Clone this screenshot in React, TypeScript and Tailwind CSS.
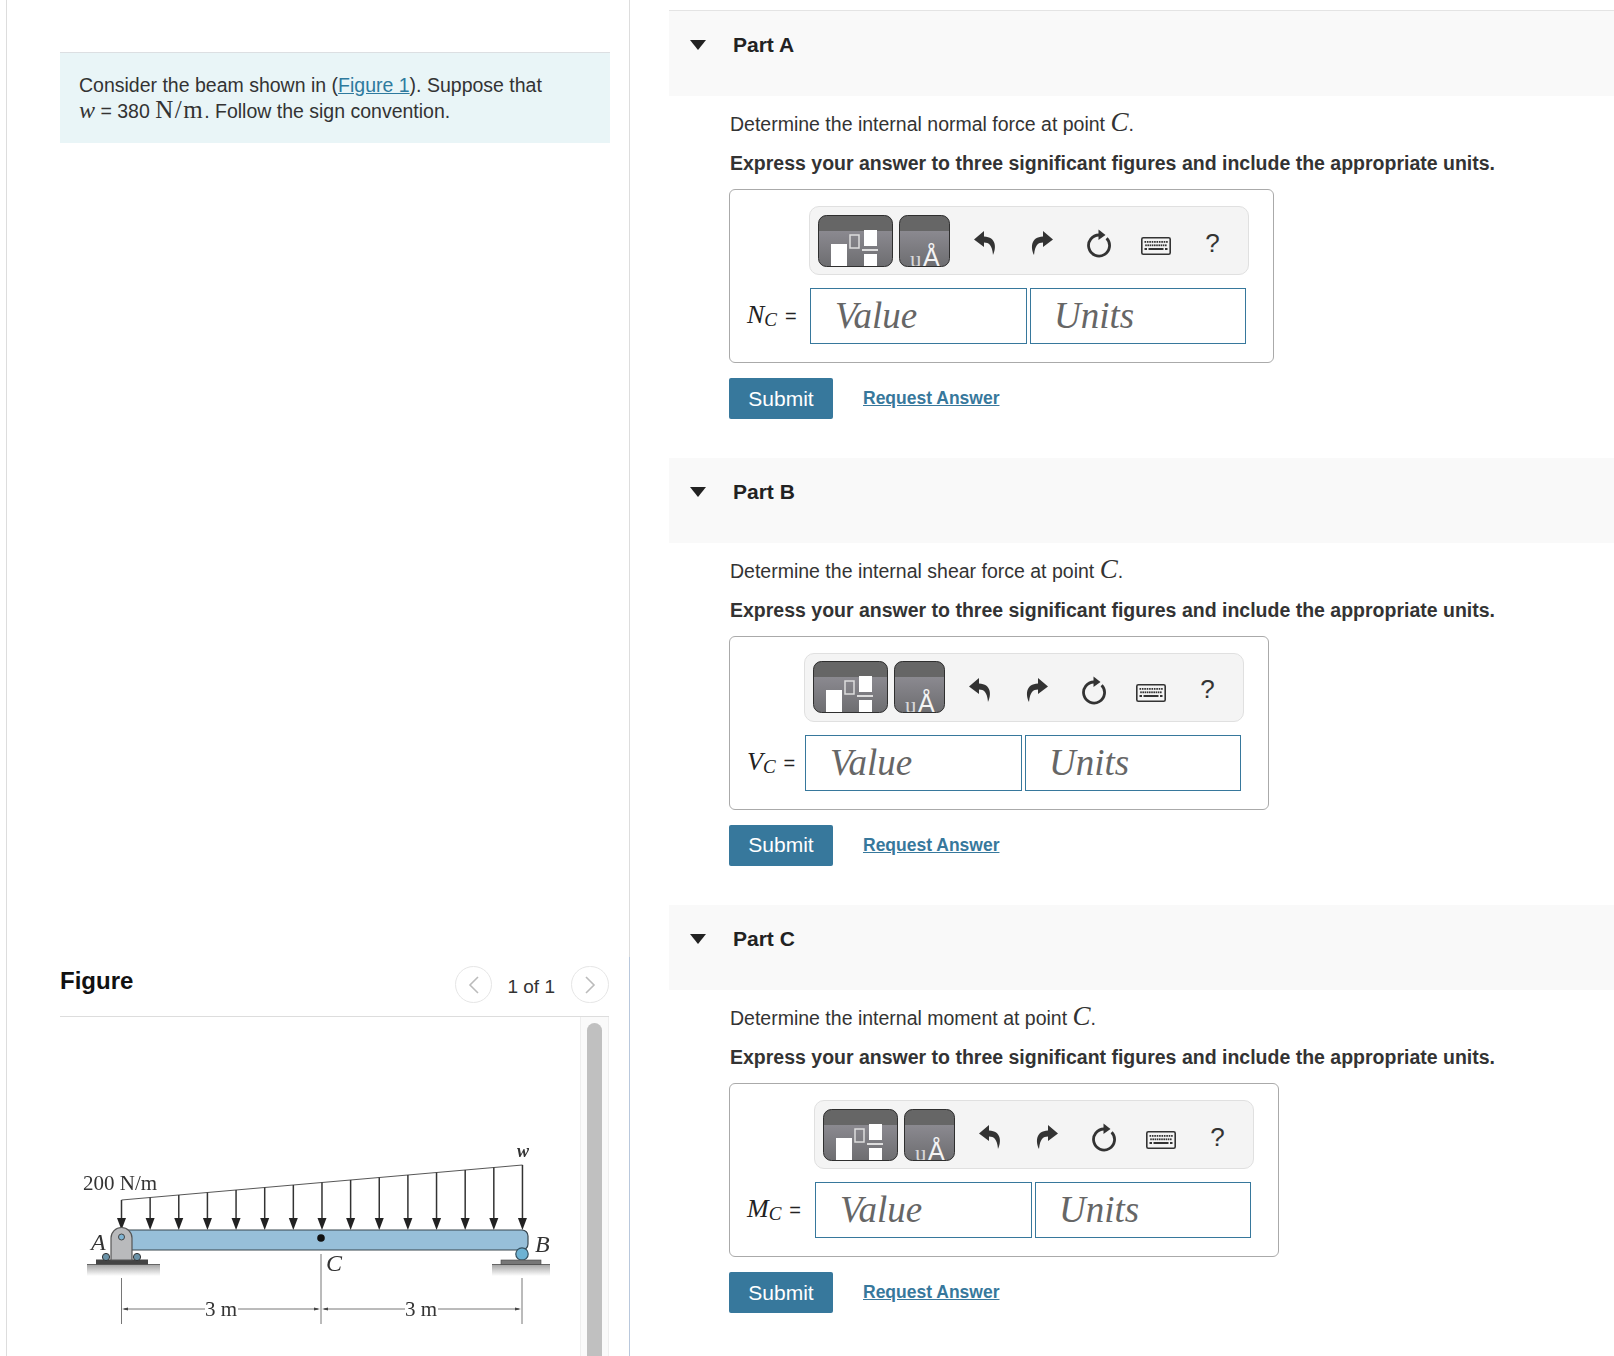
function TemplateButton() {
    return (
        <svg width="75" height="52" viewBox="0 0 75 52" className="block">
            <defs>
                <linearGradient id="tb" x1="0" y1="0" x2="0" y2="1">
                    <stop offset="0" stopColor="#98969e" />
                    <stop offset="1" stopColor="#6d6d70" />
                </linearGradient>
                <clipPath id="tc"><rect x="0.5" y="0.5" width="74" height="51" rx="8" /></clipPath>
            </defs>
            <g clipPath="url(#tc)">
                <rect width="75" height="52" fill="url(#tb)" />
                <rect width="75" height="16" fill="#666666" />
                <rect x="13" y="29" width="16" height="23" fill="#fff" />
                <rect x="32" y="20" width="9" height="13" fill="none" stroke="#ddd" strokeWidth="1.5" />
                <rect x="46" y="15" width="13" height="16" fill="#fff" />
                <rect x="44" y="34" width="16" height="2" fill="#ddd" />
                <rect x="46" y="39" width="13" height="13" fill="#fff" />
            </g>
            <rect x="0.5" y="0.5" width="74" height="51" rx="8" fill="none" stroke="#2f2f2f" />
        </svg>
    )
}

function UnitButton() {
    return (
        <svg width="51" height="52" viewBox="0 0 51 52" className="block">
            <defs>
                <linearGradient id="ub" x1="0" y1="0" x2="0" y2="1">
                    <stop offset="0" stopColor="#98969e" />
                    <stop offset="1" stopColor="#6d6d70" />
                </linearGradient>
                <clipPath id="uc"><rect x="0.5" y="0.5" width="50" height="51" rx="8" /></clipPath>
            </defs>
            <g clipPath="url(#uc)">
                <rect width="51" height="52" fill="url(#ub)" />
                <rect width="51" height="16" fill="#666666" />
                <text x="11" y="52" fontSize="23" fill="#d8d8d8" fontFamily="Liberation Serif">u</text>
                <text x="24" y="51" fontSize="25" fill="#f4f4f4" fontFamily="Liberation Sans">Å</text>
            </g>
            <rect x="0.5" y="0.5" width="50" height="51" rx="8" fill="none" stroke="#2f2f2f" />
        </svg>
    )
}

function UndoIcon({ flip }: { flip?: boolean }) {
    return (
        <svg width="24" height="28" viewBox="0 0 24 28" className={flip ? '-scale-x-100' : ''}>
            <path d="M11 2 L1 10.5 L11 18 V13.5 C16 13.5 19 16 20 26 C23.5 19 23.5 8 11 7.5 Z" fill="#333" />
        </svg>
    )
}

function RefreshIcon() {
    return (
        <svg width="28" height="30" viewBox="0 0 28 30">
            <path d="M14 7 A10.5 10.5 0 1 0 21.6 10.2" fill="none" stroke="#333" strokeWidth="2.8" />
            <path d="M13.5 1.5 L20.5 7 L13.5 12 Z" fill="#333" />
        </svg>
    )
}

function KeyboardIcon() {
    const keys = [0, 1, 2, 3, 4, 5, 6, 7, 8, 9]
    return (
        <svg width="30" height="18" viewBox="0 0 30 18">
            <rect x="0.8" y="0.8" width="28.4" height="16.4" rx="1.5" fill="#f4f4f4" stroke="#333" strokeWidth="1.6" />
            {keys.map(i => <rect key={i} x={3.5 + i * 2.4} y="4" width="1.6" height="1.8" fill="#333" />)}
            {keys.map(i => <rect key={i} x={4.2 + i * 2.2} y="7.4" width="1.6" height="1.8" fill="#333" />)}
            <rect x="3.5" y="11" width="2.5" height="2" fill="#333" />
            <rect x="7.5" y="11" width="15" height="2" fill="#333" />
            <rect x="24" y="11" width="2.5" height="2" fill="#333" />
        </svg>
    )
}

function Slot({ children }: { children: React.ReactNode }) {
    return <div className="w-[57px] flex items-center justify-center">{children}</div>
}

interface PartProps {
    name: string
    prompt: string
    symbol: string
    /** left edge of the inputs, counted from the box */
    labelWidth: string
    boxWidth: string
    /** only the first header has the rule on top */
    first?: boolean
}

function Part({ name, prompt, symbol, labelWidth, boxWidth, first }: PartProps) {
    return (
        <section className={first ? 'mb-[38.5px]' : 'mb-[39.5px]'}>
            <div className={`${first ? 'h-[86px] border-t border-[#e4e4e4]' : 'h-[85px]'} bg-[#f9f9f9] flex items-center pb-[17px]`}>
                <svg width="16" height="10" viewBox="0 0 16 10" className="ml-[21px]">
                    <path d="M0 0 H16 L8 10 Z" fill="#222" />
                </svg>
                <h2 className="ml-[27px] text-[21px] font-bold text-[#222]">Part {name}</h2>
            </div>
            <div className="pl-[60px]">
                <p className="mt-[14px] pl-[1px] leading-[24px] text-[19.5px] text-[#333]">
                    Determine the internal {prompt} at point <i className="font-['Liberation_Serif'] text-[27px]">C</i>.
                </p>
                <p className="mt-[15px] pl-[1px] leading-[24px] text-[19.5px] font-bold text-[#333]">
                    Express your answer to three significant figures and include the appropriate units.
                </p>
                <div className={`mt-[14px] h-[174px] ${boxWidth} border border-[#aaaaaa] rounded-[6px] pt-[16px] pl-[17px]`}>
                    <div className="flex">
                        <div className={labelWidth} />
                        <div className="w-[440px] h-[69px] -ml-[1px] bg-[#f4f4f4] border border-[#e0e0e0] rounded-[10px] flex items-center pl-[8px]">
                            <TemplateButton />
                            <div className="ml-[6px]"><UnitButton /></div>
                            <div className="ml-[6px] mt-[5px] flex items-center">
                                <Slot><UndoIcon /></Slot>
                                <Slot><UndoIcon flip /></Slot>
                                <Slot><RefreshIcon /></Slot>
                                <Slot><div className="mt-[6px]"><KeyboardIcon /></div></Slot>
                                <Slot><span className="text-[26px] text-[#333]">?</span></Slot>
                            </div>
                        </div>
                    </div>
                    <div className="flex items-center mt-[13px]">
                        <div className={`${labelWidth} font-['Liberation_Serif'] text-[#222] text-[26px] leading-[30px] whitespace-nowrap`}>
                            <i>{symbol}</i><i className="text-[19px] relative top-[3px]">C</i>
                            <span className="font-['Liberation_Sans'] text-[20px] ml-[8px]">=</span>
                        </div>
                        <div className="w-[217px] h-[56px] border border-[#37789c] pl-[24px] flex items-center font-['Liberation_Serif'] italic text-[37px] text-[#666]">Value</div>
                        <div className="w-[216px] h-[56px] ml-[3px] border border-[#37789c] pl-[23px] flex items-center font-['Liberation_Serif'] italic text-[37px] text-[#666]">Units</div>
                    </div>
                </div>
                <div className="mt-[15px] flex items-center">
                    <button className="w-[104px] h-[41px] bg-[#37789c] rounded-[2px] text-white text-[21px]">Submit</button>
                    <a className="ml-[30px] text-[#37789c] text-[17.5px] font-bold underline">Request Answer</a>
                </div>
            </div>
        </section>
    )
}

function BeamFigure() {
    const arrows = Array.from({ length: 15 }, (_, i) => 61.5 + i * 28.64)
    return (
        <svg width="520" height="339" viewBox="0 0 520 339" className="block blur-[0.6px]">
            <defs>
                <linearGradient id="shade" x1="0" y1="0" x2="0" y2="1">
                    <stop offset="0" stopColor="#a8a8a8" />
                    <stop offset="1" stopColor="#ffffff" />
                </linearGradient>
            </defs>
            {/* load */}
            <path d="M61.5 183 L462.5 148" stroke="#444" strokeWidth="0.9" fill="none" />
            {arrows.map((x, i) => (
                <g key={x}>
                    <line x1={x} y1={183 - i * 2.5} x2={x} y2="204" stroke="#333" strokeWidth="1.5" />
                    <path d={`M${x - 4.5} 201 L${x + 4.5} 201 L${x} 213 Z`} fill="#222" />
                </g>
            ))}
            {/* ground shadows */}
            <rect x="27" y="248" width="73" height="11" fill="url(#shade)" />
            <rect x="432" y="248" width="58" height="11" fill="url(#shade)" />
            <line x1="27" y1="247.5" x2="100" y2="247.5" stroke="#666" strokeWidth="1.2" />
            <line x1="432" y1="247.5" x2="490" y2="247.5" stroke="#666" strokeWidth="1.2" />
            {/* beam */}
            <rect x="58" y="213" width="410" height="20" rx="6" fill="#97bfd9" stroke="#38464f" strokeWidth="1.2" />
            <circle cx="261" cy="221" r="3.8" fill="#111" />
            {/* pin support */}
            <rect x="36" y="242.5" width="52" height="5" fill="#444" />
            <circle cx="46" cy="240" r="3.6" fill="#6b93a8" stroke="#333" />
            <circle cx="77" cy="240" r="3.6" fill="#6b93a8" stroke="#333" />
            <path d="M51 243 V221 A10.5 10.5 0 0 1 72 221 V243 Z" fill="#b9babc" stroke="#555" strokeWidth="1.2" />
            <circle cx="61.5" cy="220" r="3" fill="#7fb4d3" stroke="#444" />
            {/* roller */}
            <circle cx="462" cy="237" r="6.2" fill="#6db2d3" stroke="#35505f" strokeWidth="1.2" />
            <rect x="441" y="243" width="40" height="4.5" fill="#777" stroke="#444" strokeWidth="0.6" />
            {/* dimensions */}
            <g stroke="#666" strokeWidth="0.9" fill="none">
                <line x1="61.5" y1="261" x2="61.5" y2="307" />
                <line x1="261" y1="237" x2="261" y2="307" />
                <line x1="462" y1="261" x2="462" y2="307" />
                <line x1="64" y1="292" x2="145" y2="292" />
                <line x1="178" y1="292" x2="258" y2="292" />
                <line x1="264" y1="292" x2="345" y2="292" />
                <line x1="378" y1="292" x2="459" y2="292" />
            </g>
            <g fill="#444">
                <path d="M62 292 L68 290.4 L68 293.6 Z" />
                <path d="M260 292 L254 290.4 L254 293.6 Z" />
                <path d="M262 292 L268 290.4 L268 293.6 Z" />
                <path d="M461 292 L455 290.4 L455 293.6 Z" />
            </g>
            <g fontFamily="Liberation Serif" fill="#333">
                <text x="23" y="173" fontSize="21">200 N/m</text>
                <text x="145" y="299" fontSize="21">3 m</text>
                <text x="345" y="299" fontSize="21">3 m</text>
                <text x="31" y="233" fontSize="24" fontStyle="italic">A</text>
                <text x="266" y="254" fontSize="24" fontStyle="italic">C</text>
                <text x="475" y="235" fontSize="24" fontStyle="italic">B</text>
                <text x="457" y="140" fontSize="18" fontStyle="italic" fontWeight="bold">w</text>
            </g>
        </svg>
    )
}

export default function App() {
    return (
        <div className="w-[1614px] h-[1356px] overflow-hidden bg-white flex font-['Liberation_Sans',sans-serif]">
            <div className="ml-[6px] w-[624px] h-full flex flex-col border-l border-[#dddddd] shrink-0">
                <div className="h-[957px] border-r border-[#dddddd] pl-[53px] pr-[19px] pt-[52px]">
                    <div className="h-[91px] bg-[#e9f5f7] border-t border-[#dcdfe2] pl-[19px] pt-[20px] text-[19.5px] leading-[24px] text-[#333]">
                        Consider the beam shown in (<a className="text-[#2e7a9e] underline">Figure 1</a>). Suppose that
                        <br />
                        <i className="font-['Liberation_Serif'] text-[24px] leading-none">w</i> = 380 <span className="font-['Liberation_Serif'] text-[25px] leading-none tracking-[1.5px]">N/m</span>. Follow the sign convention.
                    </div>
                </div>
                <div className="flex-1 min-h-0 border-r border-[#b9c8dc] pl-[53px] pr-[20px] flex flex-col">
                    <div className="h-[60px] border-b border-[#dddddd] flex items-start shrink-0">
                        <h2 className="mt-[9px] text-[24px] leading-[30px] font-bold text-[#111] flex-1">Figure</h2>
                        <div className="mt-[9px] w-[37px] h-[37px] rounded-full border border-[#e6e6e6] flex items-center justify-center">
                            <svg width="12" height="20" viewBox="0 0 12 20"><path d="M10 2 L2 10 L10 18" fill="none" stroke="#bbbbbb" strokeWidth="1.6" /></svg>
                        </div>
                        <span className="mt-[18px] ml-[15px] mr-[16px] text-[19px] leading-[24px] text-[#333]">1 of 1</span>
                        <div className="mt-[9px] w-[38px] h-[37px] rounded-full border border-[#e6e6e6] flex items-center justify-center">
                            <svg width="12" height="20" viewBox="0 0 12 20"><path d="M2 2 L10 10 L2 18" fill="none" stroke="#bbbbbb" strokeWidth="1.6" /></svg>
                        </div>
                    </div>
                    <div className="flex-1 min-h-0 flex overflow-hidden">
                        <div className="w-[520px]"><BeamFigure /></div>
                        <div className="w-[29px] bg-[#fafafa] border-x border-[#eeeeee] pt-[6px] flex justify-center">
                            <div className="w-[15px] h-[600px] bg-[#c0c0c0] rounded-t-[8px]" />
                        </div>
                    </div>
                </div>
            </div>
            <div className="flex-1 pl-[39px] pt-[10px]">
                <Part first name="A" prompt="normal force" symbol="N" labelWidth="w-[63px]" boxWidth="w-[545px]" />
                <Part name="B" prompt="shear force" symbol="V" labelWidth="w-[58px]" boxWidth="w-[540px]" />
                <Part name="C" prompt="moment" symbol="M" labelWidth="w-[68px]" boxWidth="w-[550px]" />
            </div>
        </div>
    )
}
